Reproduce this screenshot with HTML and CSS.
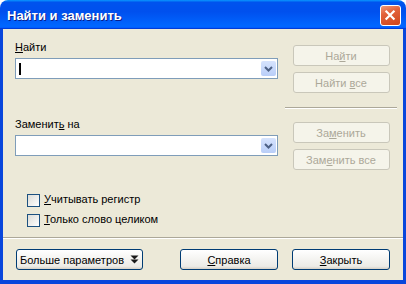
FILE: index.html
```html
<!DOCTYPE html>
<html lang="ru">
<head>
  <meta charset="UTF-8">
  <title>Найти и заменить</title>
  <link rel="stylesheet" href="styles.css">
</head>
<body>
  <div class="window">
    <div class="titlebar">
      <span class="title">Найти и заменить</span>
      <button class="close" aria-label="Закрыть">
        <svg viewBox="0 0 21 21" width="19" height="19">
          <path d="M6 6 L14 14 M14 6 L6 14" stroke="#fff" stroke-width="2.4" stroke-linecap="square" fill="none"/>
        </svg>
      </button>
    </div>

    <div class="frame">
      <div class="content">
        <div class="fields">
          <div class="field-label"><u>Н</u>айти</div>
          <div class="combo">
            <span class="caret"></span>
            <span class="combo-arrow">
              <svg viewBox="0 0 15 15" width="15" height="15">
                <path d="M4 6 L7.5 9.5 L11 6" stroke="#4d6185" stroke-width="2" fill="none"/>
              </svg>
            </span>
          </div>

          <div class="field-label second">Заменит<u>ь</u> на</div>
          <div class="combo">
            <span class="combo-arrow">
              <svg viewBox="0 0 15 15" width="15" height="15">
                <path d="M4 6 L7.5 9.5 L11 6" stroke="#4d6185" stroke-width="2" fill="none"/>
              </svg>
            </span>
          </div>

          <div class="checks">
            <label class="check"><span class="box"></span><span class="check-text"><u>У</u>читывать регистр</span></label>
            <label class="check"><span class="box"></span><span class="check-text"><u>Т</u>олько слово целиком</span></label>
          </div>
        </div>

        <div class="actions">
          <button class="btn side" disabled>На<u>й</u>ти</button>
          <button class="btn side" disabled>Найти <u>в</u>се</button>
          <div class="sep"></div>
          <button class="btn side" disabled>За<u>м</u>енить</button>
          <button class="btn side" disabled>Зам<u>е</u>нить все</button>
        </div>
      </div>

      <div class="footer">
        <button class="btn more">Больше параметров
          <svg viewBox="0 0 9 9" width="9" height="9">
            <polygon points="0.5,0.5 8.5,0.5 4.5,4.5" fill="#1a1a1a"/>
            <polygon points="0.5,4.5 8.5,4.5 4.5,8.5" fill="#1a1a1a"/>
          </svg>
        </button>
        <button class="btn wide help"><u>С</u>правка</button>
        <button class="btn wide"><u>З</u>акрыть</button>
      </div>
    </div>
  </div>
</body>
</html>
```

FILE: styles.css
```css
* {
  margin: 0;
  padding: 0;
  box-sizing: border-box;
}

body {
  background: #fff;
  font-family: 'Liberation Sans', Arial, sans-serif;
  font-size: 11px;
  color: #000;
}

.window {
  width: 406px;
  height: 284px;
  display: flex;
  flex-direction: column;
}

.titlebar {
  height: 29px;
  flex-shrink: 0;
  display: flex;
  align-items: center;
  padding: 2px 5px 0 7px;
  border-radius: 8px 8px 0 0;
  background: linear-gradient(180deg, #0997ff, #0053ee 8%, #0050ee 40%, #0066ff 88%, #0066ff 93%, #005bff 95%, #003dd7 96%, #003dd7);
}

.title {
  font-size: 13px;
  font-weight: 700;
  line-height: 15px;
  color: #fff;
  text-shadow: 1px 1px #0a1e8c;
}

.close {
  margin-left: auto;
  width: 21px;
  height: 21px;
  border: 1px solid #fff;
  border-radius: 3px;
  background: linear-gradient(160deg, #f09a7a 0%, #e2623c 35%, #cf4519 100%);
  display: flex;
  align-items: center;
  justify-content: center;
}

.frame {
  flex: 1;
  display: flex;
  flex-direction: column;
  background: #ece9d8;
  border: 3px solid #0846dc;
  border-top: none;
  border-bottom-width: 4px;
}

.content {
  flex: 1;
  display: flex;
  gap: 7px;
  padding: 12px 6px 0 12px;
}

.fields {
  width: 263px;
}

.field-label {
  line-height: 13px;
  height: 13px;
  margin-bottom: 4px;
}

.field-label.second {
  margin-top: 39px;
}

.combo {
  height: 21px;
  border: 1px solid #7f9db9;
  background: #fff;
  display: flex;
  align-items: center;
  padding: 0 1px 0 3px;
}

.caret {
  width: 2px;
  height: 12px;
  background: #000;
}

.combo-arrow {
  margin-left: auto;
  width: 15px;
  height: 15px;
  border-radius: 2px;
  background: linear-gradient(180deg, #d6e3fd, #b9cef8);
  display: flex;
}

.checks {
  margin-top: 38px;
  padding-left: 12px;
  display: flex;
  flex-direction: column;
  gap: 7px;
}

.check {
  display: flex;
  align-items: center;
  gap: 4px;
  height: 13px;
}

.box {
  width: 13px;
  height: 13px;
  border: 1px solid #1c5180;
  background: linear-gradient(135deg, #dcdcd7, #fff);
}

.check-text {
  line-height: 13px;
  position: relative;
  top: -1px;
}

.actions {
  width: 112px;
  padding-top: 4px;
  display: flex;
  flex-direction: column;
  align-items: center;
}

.sep {
  width: 100%;
  height: 2px;
  border-top: 1px solid #aca899;
  border-bottom: 1px solid #fff;
  margin: 14px 0 13px;
}

.btn {
  font-family: inherit;
  font-size: 11px;
  height: 21px;
  border: 1px solid #003c74;
  border-radius: 3px;
  background: linear-gradient(180deg, #fff, #ecebe6 86%, #d6d0c5);
  color: #000;
}

.btn:disabled {
  border-color: #c9c7ba;
  background: #f5f4ea;
  color: #aca899;
}

.side {
  width: 97px;
}

.side + .side {
  margin-top: 6px;
}

.footer {
  flex-shrink: 0;
  display: flex;
  align-items: center;
  gap: 14px;
  border-top: 1px solid #aca899;
  box-shadow: inset 0 1px #fff;
  padding: 11px 13px 10px;
}

.more {
  width: 127px;
  display: flex;
  align-items: center;
  justify-content: center;
  gap: 6px;
}

.wide {
  width: 98px;
}

.help {
  margin-left: auto;
}
```
